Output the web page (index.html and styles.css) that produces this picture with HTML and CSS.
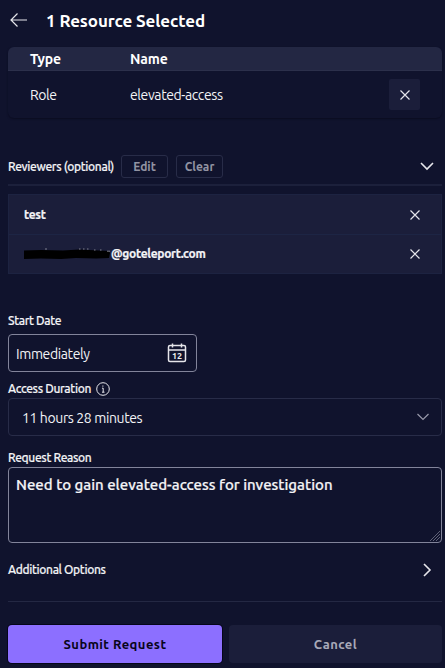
FILE: index.html
```html
<!DOCTYPE html>
<html lang="en">
<head>
<meta charset="utf-8">
<title>Access Request</title>
<link rel="stylesheet" href="styles.css">
</head>
<body>
<main class="panel">
  <header class="title-row">
    <svg width="20" height="16" viewBox="0 0 20 16"><path d="M18 8H2M8.500 1.500 2 8l6.500 6.500"/></svg>
    <h1>1 Resource Selected</h1>
  </header>

  <section class="table">
    <div class="table-row table-head"><b>Type</b><b>Name</b></div>
    <div class="table-row table-item">
      <span>Role</span><span>elevated-access</span>
      <button class="remove"><svg width="12" height="12" viewBox="0 0 12 12"><path d="m1.500 1.500 9 9m0-9-9 9"/></svg></button>
    </div>
  </section>

  <section class="reviewers-head">
    <span class="label">Reviewers (optional)</span>
    <button class="small edit">Edit</button>
    <button class="small">Clear</button>
    <svg class="end" width="16" height="10" viewBox="0 0 16 10"><path class="bold" d="m2 2 6 6 6-6"/></svg>
  </section>

  <ul class="reviewers">
    <li><b>test</b><svg class="end" width="12" height="12" viewBox="0 0 12 12"><path d="m1.500 1.500 9 9m0-9-9 9"/></svg></li>
    <li>
      <svg class="redaction" width="87" height="14" viewBox="0 0 87 14"><path class="ink" d="M0 3.500 17 3l22 .5L55 2.500l20 1 10 .5 1 2-1 5-13 .5-20-.5-15 1-20-.5L0 12z"/><path class="specks" d="M21 2h2M55 2h1.500M59 2h1.500M63 2h1.500M70 3h1.500M76 3h1.500M83 4.200h3"/></svg>
      <b>@goteleport.com</b>
      <svg class="end" width="12" height="12" viewBox="0 0 12 12"><path d="m1.500 1.500 9 9m0-9-9 9"/></svg>
    </li>
  </ul>

  <div class="label start-label">Start Date</div>
  <div class="field date">
    <span>Immediately</span>
    <svg class="end" width="20" height="20" viewBox="0 0 20 20"><rect x="1.500" y="2.500" width="17" height="16" rx="1.500"/><path d="M1.500 7h17M5.500.5v4M14.500.5v4"/><text x="10" y="16.200" text-anchor="middle">12</text></svg>
  </div>

  <div class="label duration-label"><span>Access Duration</span>
    <svg width="14" height="14" viewBox="0 0 14 14"><circle cx="7" cy="7" r="6.300"/><path d="M6 6.200h1.200v4M6 10.200h2.500M6.900 3.500v1.200"/></svg>
  </div>
  <div class="field select">
    <span>11 hours 28 minutes</span>
    <svg class="end" width="14" height="8" viewBox="0 0 14 8"><path d="m1.500 1 5.500 5.500L12.500 1"/></svg>
  </div>

  <div class="label reason-label">Request Reason</div>
  <div class="field reason">
    <span>Need to gain elevated-access for investigation</span>
    <svg class="grip" width="12" height="12" viewBox="0 0 12 12"><path d="M1 11 11 1M4 11l7-7M7 11l4-4"/></svg>
  </div>

  <div class="label options">Additional Options
    <svg class="end" width="10" height="16" viewBox="0 0 10 16"><path class="bold" d="m2 2 6 6-6 6"/></svg>
  </div>

  <footer class="actions">
    <button class="submit">Submit Request</button>
    <button class="cancel">Cancel</button>
  </footer>
</main>
</body>
</html>
```
FILE: styles.css
```css
* { box-sizing: border-box; }
body {
  margin: 0;
  height: 668px;
  overflow: hidden;
  background: #10132d;
  color: #f3f3f6;
  font: 14px/20px Ubuntu, "Noto Sans", sans-serif;
}
.panel { width: 434px; margin-left: 8px; }
svg { display: block; flex: none; fill: none; stroke: #e6e6eb; stroke-width: 1.2; }
svg .bold { stroke-width: 1.6; }
span, b { white-space: nowrap; }
button { display: flex; align-items: center; justify-content: center; padding: 0; border: 0; font: inherit; }
.end { margin-left: auto; }

.title-row { display: flex; align-items: center; height: 47px; padding: 0 0 5px 1px; gap: 17px; }
.title-row svg { margin-bottom: 2px; }
h1 { margin: 0; font-size: 17px; line-height: 24px; letter-spacing: -.1px; color: #fff; }

.table { height: 71px; border-radius: 6px; overflow: hidden; box-shadow: 0 1px 2px #0a0c20; }
.table-row { display: grid; grid-template-columns: 100px 1fr 31px; align-items: center; padding: 0 22px; }
.table-head { height: 24px; background: #232743; border-bottom: 1px solid #2c304b; color: #fff; letter-spacing: -.1px; }
.table-item { height: 47px; letter-spacing: -.4px; }
.remove { width: 31px; height: 31px; border-radius: 2px; background: #1b1e3a; }

.label { font-size: 12px; line-height: 16px; font-weight: 500; letter-spacing: -.34px; -webkit-text-stroke: .15px currentColor; }
.reviewers-head { display: flex; align-items: center; height: 40px; margin-top: 28px; border-bottom: 2px solid #1c203b; padding: 2px 7px 0 0; }
.small { width: 47px; height: 23px; padding-top: 1px; border: 1px solid #282c48; border-radius: 3px; background: transparent; color: #9293a3; font-size: 12px; font-weight: 600; }
.edit { margin: 0 8px 0 0; }
.reviewers-head .label { width: 113px; padding-top: 1px; }
.reviewers { margin: 8px 0 0; padding: 0; list-style: none; border: 1px solid #1d2341; background: #1b1e3a; font-size: 12px; letter-spacing: -.3px; }
.reviewers b { -webkit-text-stroke: .2px currentColor; }
.reviewers li { display: flex; align-items: center; height: 39px; padding: 0 20px 0 15px; }
.reviewers li + li { height: 39px; border-top: 1px solid #1d2544; }
.redaction .ink { fill: #000; stroke: none; }
.redaction .specks { stroke: #9a9ba5; stroke-width: .8; }

.start-label { margin-top: 39px; }
.field { display: flex; align-items: center; border: 1px solid #82849a; border-radius: 4px; }
.date { width: 189px; height: 38px; margin-top: 5px; padding: 0 9px 0 7px; letter-spacing: -.38px; }
.date span { padding-top: 1px; }
.date svg { stroke-width: 1.5; letter-spacing: 0; }
.date text { fill: #eee; stroke: none; font-size: 9px; font-weight: 700; }
.duration-label { display: flex; align-items: center; gap: 6px; margin-top: 8px; }
.duration-label svg { stroke-width: 1; }
.duration-label span { width: 82px; padding-top: 1px; }
.select { height: 38px; margin-top: 1px; padding: 0 11px 0 13px; border-color: #282c48; letter-spacing: -.38px; }
.select span { padding-top: 1px; }
.select svg { stroke: #9899aa; }
.reason-label { margin-top: 14px; }
.reason { position: relative; align-items: flex-start; height: 76px; margin-top: 1px; padding: 7px; font-size: 15px; font-weight: 500; }
.reason span { -webkit-text-stroke: .2px currentColor; }
.grip { position: absolute; right: 0; bottom: 0; stroke: #74768a; stroke-width: .8; }
.options { display: flex; align-items: center; height: 59px; padding: 0 10px 5px 0; border-bottom: 1px solid #242843; }

.actions { display: grid; grid-template-columns: 214px 213px; gap: 7px; margin-top: 23px; }
.actions button { height: 38px; border-radius: 4px; font-size: 13px; font-weight: 700; letter-spacing: .45px; }
.actions .submit { background: #8c6fff; color: #08051a; box-shadow: 0 0 0 1px #05051a; }
.actions .cancel { background: #1b1e3a; color: #a8a9b8; }
```
